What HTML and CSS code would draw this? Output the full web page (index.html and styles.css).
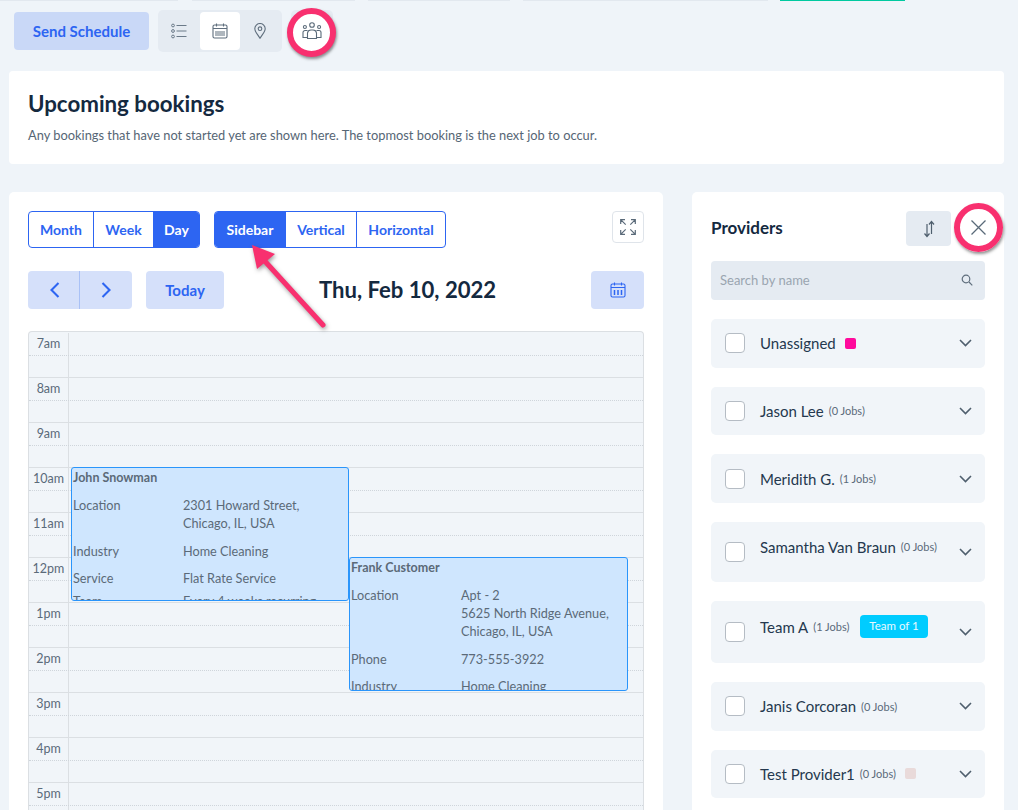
FILE: index.html
```html
<!DOCTYPE html>
<html lang="en">
<head>
<meta charset="utf-8">
<title>Upcoming bookings</title>
<link rel="stylesheet" href="styles.css">
</head>
<body>
<div class="topstrip">
  <span class="ts ts1"></span><span class="ts ts2"></span><span class="ts ts3"></span><span class="ts ts4"></span><span class="ts ts5"></span>
</div>
<div class="toolbar">
  <button class="send">Send Schedule</button>
  <div class="viewtoggle">
    <span class="vt">
      <svg width="16" height="16" viewBox="0 0 16 16" fill="none" stroke="#6b7a89" stroke-width="1"><circle cx="2" cy="2.500" r="1.400"/><circle cx="2" cy="8" r="1.400"/><circle cx="2" cy="13.500" r="1.400"/><path d="M5.500 2.500H15.500M5.500 8H15.500M5.500 13.500H15.500"/></svg>
    </span>
    <span class="vt vt-on">
      <svg width="16" height="16" viewBox="0 0 16 16" fill="none" stroke="#5f6e7d" stroke-width="1.100"><rect x="1" y="2" width="14" height="13" rx="1.500"/><path d="M4.500 .5v3M11.500 .5v3M1 5.500h14"/><path d="M4 8v5M8 8v5M12 8v5M6 8v5M10 8v5" stroke-width="1"/></svg>
    </span>
    <span class="vt vt-pin">
      <svg width="12" height="16" viewBox="0 0 12 16" fill="none" stroke="#5f6e7d" stroke-width="1.100"><path d="M6 15.300C3.800 11.500 .8 8.800 .8 5.700a5.200 5.200 0 0 1 10.400 0c0 3.100-3 5.800-5.200 9.600z"/><circle cx="6" cy="5.700" r="1.800"/></svg>
    </span>
  </div>
  <div class="groupbtn">
    <svg class="groupicon" width="20" height="18" viewBox="0 0 20 18" fill="none" stroke="#5a6a79" stroke-width="1.100"><circle cx="10" cy="3" r="2.300"/><circle cx="2.900" cy="5" r="1.500"/><circle cx="17.100" cy="5" r="1.500"/><path d="M5.500 16.500V11a3.500 3.500 0 0 1 3.500-3h2a3.500 3.500 0 0 1 3.500 3v5.500z"/><path d="M5.500 15.500H1V10.500a2 2 0 0 1 2-2h2.500M14.500 15.500H19V10.500a2 2 0 0 0-2-2h-2.500"/></svg>
    <span class="ring"></span>
  </div>
</div>

<section class="intro">
  <h1>Upcoming bookings</h1>
  <p>Any bookings that have not started yet are shown here. The topmost booking is the next job to occur.</p>
</section>

<main class="columns">
  <section class="calcard">
    <div class="calhead">
      <div class="seg">
        <span class="segitem seg-month">Month</span><span class="segitem seg-week">Week</span><span class="segitem seg-day on">Day</span>
      </div>
      <div class="seg seg-layout">
        <span class="segitem seg-side on">Sidebar</span><span class="segitem seg-vert">Vertical</span><span class="segitem seg-hor">Horizontal</span>
      </div>
      <button class="expand" aria-label="Expand">
        <svg width="16" height="16" viewBox="0 0 16 16" fill="none" stroke="#5a6a79" stroke-width="1.200"><path d="M.7 5V.7H5M.7 .7l5 5M11 .7h4.300V5M15.300 .7l-5 5M.7 11v4.300H5M.7 15.300l5-5M11 15.300h4.300V11M15.300 15.300l-5-5"/></svg>
      </button>
    </div>
    <div class="calnav">
      <div class="pager">
        <span class="pg pg-prev"><svg width="10" height="16" viewBox="0 0 10 16" fill="none" stroke="#2d65f2" stroke-width="2.100"><path d="M8.500 1 1.500 8l7 7"/></svg></span>
        <span class="pg pg-next"><svg width="10" height="16" viewBox="0 0 10 16" fill="none" stroke="#2d65f2" stroke-width="2.100"><path d="m1.500 1 7 7-7 7"/></svg></span>
      </div>
      <button class="today">Today</button>
      <h2 class="date">Thu, Feb 10, 2022</h2>
      <button class="calbtn" aria-label="Pick date">
        <svg width="16" height="16" viewBox="0 0 16 16" fill="none" stroke="#2d65f2" stroke-width="1.100"><rect x="1" y="2" width="14" height="13" rx="1.500"/><path d="M4.500 .5v3M11.500 .5v3M1 5.500h14"/><path d="M4.500 8v5M8 8v5M11.500 8v5" stroke-width="1.500"/></svg>
      </button>
    </div>

    <div class="grid">
      <div class="hour"><span class="hl">7am</span><span class="hb"></span></div>
      <div class="hour"><span class="hl">8am</span><span class="hb"></span></div>
      <div class="hour"><span class="hl">9am</span><span class="hb"></span></div>
      <div class="hour"><span class="hl">10am</span><span class="hb"></span></div>
      <div class="hour"><span class="hl">11am</span><span class="hb"></span></div>
      <div class="hour"><span class="hl">12pm</span><span class="hb"></span></div>
      <div class="hour"><span class="hl">1pm</span><span class="hb"></span></div>
      <div class="hour"><span class="hl">2pm</span><span class="hb"></span></div>
      <div class="hour"><span class="hl">3pm</span><span class="hb"></span></div>
      <div class="hour"><span class="hl">4pm</span><span class="hb"></span></div>
      <div class="hour"><span class="hl">5pm</span><span class="hb"></span></div>

      <article class="event ev-john">
        <div class="evtitle">John Snowman</div>
        <dl>
          <dt>Location</dt><dd>2301 Howard Street,<br>Chicago, IL, USA</dd>
          <dt>Industry</dt><dd>Home Cleaning</dd>
          <dt>Service</dt><dd>Flat Rate Service</dd>
          <dt class="peek">Team</dt><dd class="peek">Every 4 weeks recurring</dd>
        </dl>
      </article>
      <article class="event ev-frank">
        <div class="evtitle">Frank Customer</div>
        <dl>
          <dt>Location</dt><dd>Apt - 2<br>5625 North Ridge Avenue,<br>Chicago, IL, USA</dd>
          <dt>Phone</dt><dd>773-555-3922</dd>
          <dt>Industry</dt><dd>Home Cleaning</dd>
        </dl>
      </article>
    </div>
  </section>

  <aside class="provcard">
    <div class="provhead">
      <h3>Providers</h3>
      <button class="sort" aria-label="Sort">
        <svg width="12" height="18" viewBox="0 0 12 18" fill="none" stroke="#4f5f6e" stroke-width="1.200"><path d="M4 4v12M1.500 13.500 4 16.500l2.500-3M8.500 14V2M6 4.500 8.500 1.500l2.500 3"/></svg>
      </button>
      <button class="close" aria-label="Close">
        <svg width="15" height="15" viewBox="0 0 15 15" fill="none" stroke="#5a6a79" stroke-width="1.300"><path d="m.5 .5 14 14M14.500 .5 .5 14.500"/></svg>
        <span class="ring"></span>
      </button>
    </div>
    <div class="search">
      <span>Search by name</span>
      <svg width="12" height="12" viewBox="0 0 12 12" fill="none" stroke="#5f6e7d" stroke-width="1.200"><circle cx="5" cy="5" r="3.800"/><path d="m8 8 3.300 3.300"/></svg>
    </div>
    <ul class="plist">
      <li class="prow"><span class="cb"></span><span class="pname">Unassigned</span><span class="sw sw-pink"></span><svg class="chev" width="13" height="8" viewBox="0 0 13 8" fill="none" stroke="#4f5f6e" stroke-width="1.600"><path d="m1 1 5.500 5.500L12 1"/></svg></li>
      <li class="prow"><span class="cb"></span><span class="pname">Jason Lee</span><span class="jobs">(0 Jobs)</span><svg class="chev" width="13" height="8" viewBox="0 0 13 8" fill="none" stroke="#4f5f6e" stroke-width="1.600"><path d="m1 1 5.500 5.500L12 1"/></svg></li>
      <li class="prow"><span class="cb"></span><span class="pname">Meridith G.</span><span class="jobs">(1 Jobs)</span><svg class="chev" width="13" height="8" viewBox="0 0 13 8" fill="none" stroke="#4f5f6e" stroke-width="1.600"><path d="m1 1 5.500 5.500L12 1"/></svg></li>
      <li class="prow prow-sam"><span class="cb"></span><span class="pname">Samantha Van Braun</span><span class="jobs">(0 Jobs)</span><svg class="chev" width="13" height="8" viewBox="0 0 13 8" fill="none" stroke="#4f5f6e" stroke-width="1.600"><path d="m1 1 5.500 5.500L12 1"/></svg></li>
      <li class="prow prow-team"><span class="cb"></span><span class="pname">Team A</span><span class="jobs">(1 Jobs)</span><span class="badge">Team of 1</span><svg class="chev" width="13" height="8" viewBox="0 0 13 8" fill="none" stroke="#4f5f6e" stroke-width="1.600"><path d="m1 1 5.500 5.500L12 1"/></svg></li>
      <li class="prow"><span class="cb"></span><span class="pname">Janis Corcoran</span><span class="jobs">(0 Jobs)</span><svg class="chev" width="13" height="8" viewBox="0 0 13 8" fill="none" stroke="#4f5f6e" stroke-width="1.600"><path d="m1 1 5.500 5.500L12 1"/></svg></li>
      <li class="prow"><span class="cb"></span><span class="pname">Test Provider1</span><span class="jobs">(0 Jobs)</span><span class="sw sw-rose"></span><svg class="chev" width="13" height="8" viewBox="0 0 13 8" fill="none" stroke="#4f5f6e" stroke-width="1.600"><path d="m1 1 5.500 5.500L12 1"/></svg></li>
    </ul>
  </aside>
</main>

<svg class="arrow" width="90" height="95" viewBox="0 0 90 95" fill="none">
  <path d="M77 85 16 18" stroke="#f8306f" stroke-width="5" stroke-linecap="round"/>
  <path d="M6 5 29 14 11 29z" fill="#f8306f"/>
</svg>
</body>
</html>
```
FILE: styles.css
```css
* { box-sizing: border-box; }
html, body { margin: 0; padding: 0; height: 810px; overflow: hidden; }
body { background: #eff4f9; font-family: "Lato", "Liberation Sans", sans-serif; color: #14293f; position: relative; }
button { font-family: inherit; border: 0; padding: 0; }

.topstrip { display: flex; height: 1px; }
.ts { display: block; height: 1px; background: #e2e8ef; }
.ts1 { width: 178px; }
.ts2 { width: 163px; margin-left: 14px; }
.ts3 { width: 142px; margin-left: 13px; }
.ts4 { width: 245px; margin-left: 13px; }
.ts5 { width: 125px; margin-left: 12px; background: #00c9a0; }

.toolbar { display: flex; align-items: center; height: 42px; margin: 9px 0 0 14px; }
.send { width: 135px; height: 38px; border-radius: 4px; background: #c9d8f7; color: #2d65f2; font-size: 15px; font-weight: 700; }
.viewtoggle { display: flex; width: 124px; height: 42px; margin-left: 9px; background: #e5ebf2; border-radius: 5px; padding: 2px 0 2px 1px; }
.vt { width: 40px; height: 38px; display: flex; align-items: center; justify-content: center; }
.vt-on { background: #fff; border-radius: 4px; margin-left: 1px; }
.vt-pin { width: 39px; }
.groupbtn { position: relative; width: 42px; height: 42px; margin-left: 9px; background: #e5ebf2; border-radius: 5px; display: flex; align-items: center; justify-content: center; }
.groupicon { position: relative; z-index: 2; }
.ring { position: absolute; left: 50%; top: 50%; width: 49px; height: 49px; margin: -24.500px 0 0 -24.500px; border: 6.500px solid #f8306f; border-radius: 50%; box-shadow: 1px 2px 3px rgba(60, 60, 60, .55); pointer-events: none; z-index: 1; }
.groupbtn .ring { background: #fff; margin: -23px 0 0 -25px; }

.intro { margin: 19px 14px 0 9px; height: 93px; background: #fff; border-radius: 4px; padding: 19px; }
.intro h1 { margin: 0; font-size: 22.300px; line-height: 27px; font-weight: 700; color: #14293f; }
.intro p { margin: 10px 0 0; font-size: 12.850px; line-height: 16px; color: #566675; }

.columns { display: flex; align-items: flex-start; margin: 28px 14px 0 9px; }
.calcard { position: relative; width: 654px; height: 700px; background: #fff; border-radius: 5px 5px 0 0; padding: 19px; }
.calhead { display: flex; align-items: flex-start; height: 37px; }
.seg { display: flex; height: 37px; border: 1px solid #2d65f2; border-radius: 4px; overflow: hidden; }
.seg-layout { margin-left: 14px; }
.segitem { display: flex; align-items: center; justify-content: center; font-size: 14px; font-weight: 700; color: #2d65f2; border-left: 1px solid #2d65f2; }
.segitem:first-child { border-left: 0; }
.segitem.on { background: #2d65f2; color: #fff; }
.seg-month { width: 64px; } .seg-week { width: 60px; } .seg-day { width: 46px; }
.seg-side { width: 70px; } .seg-vert { width: 71px; } .seg-hor { width: 89px; }
.expand { margin-left: auto; width: 32px; height: 32px; background: #fff; border: 1px solid #dfe4ea; border-radius: 4px; display: flex; align-items: center; justify-content: center; }

.calnav { display: flex; align-items: center; height: 38px; margin-top: 23px; }
.pager { display: flex; width: 104px; height: 38px; background: #d5e0fa; border-radius: 4px; }
.pg { width: 52px; flex: none; display: flex; align-items: center; justify-content: center; }
.pg-prev { border-right: 1px solid #a9c1f6; padding-left: 2px; }
.today { width: 78px; height: 38px; margin-left: 14px; background: #d5e0fa; color: #2d65f2; border-radius: 4px; font-size: 15px; font-weight: 700; }
.date { margin: 0 0 0 95px; font-size: 22.100px; line-height: 38px; font-weight: 700; color: #14293f; white-space: nowrap; }
.calbtn { margin-left: auto; width: 53px; height: 38px; background: #d5e0fa; border-radius: 4px; display: flex; align-items: center; justify-content: center; }

.grid { position: relative; width: 616px; margin-top: 22px; padding-top: 1px; background: #f1f5f9; border: 1px solid #dbdfe3; border-bottom: 0; border-radius: 4px 4px 0 0; }
.hour { position: relative; display: flex; height: 45px; border-bottom: 1px solid #dbdfe3; }
.hl { width: 40px; flex: none; border-right: 1px solid #dbdfe3; font-size: 12.500px; line-height: 22px; text-align: center; color: #5a6a79; height: 44px; }
.hb { flex: 1; }
.hour::after { content: ""; position: absolute; left: 0; right: 0; top: 22px; border-top: 1px dotted #cfd5db; }

.event { position: absolute; width: 279px; height: 134px; background: #cfe6fe; border: 1px solid #2a95fb; border-radius: 3px; overflow: hidden; padding: 1px; color: #5b6a78; font-size: 12.700px; line-height: 18px; z-index: 2; }
.ev-john { left: 42px; top: 135px; width: 278px; }
.ev-frank { left: 320px; top: 225px; }
.evtitle { font-size: 12.500px; font-weight: 700; line-height: 18px; }
.event dl { display: grid; grid-template-columns: 110px 1fr; row-gap: 9.500px; margin: 9px 0 0; }
.event dt, .event dd { margin: 0; }
.event .peek { margin-top: -5px; }

.provcard { width: 312px; height: 700px; margin-left: 29px; background: #fff; border-radius: 5px 5px 0 0; padding: 19px; }
.provhead { display: flex; align-items: flex-start; height: 35px; }
.provhead h3 { margin: 0; font-size: 17px; line-height: 33px; font-weight: 700; color: #14293f; }
.sort { margin-left: auto; margin-right: 10px; width: 45px; height: 35px; background: #e5ebf2; border-radius: 4px; display: flex; align-items: center; justify-content: center; }
.close { position: relative; width: 34px; height: 32px; background: transparent; display: flex; align-items: center; justify-content: center; margin-right: -10px; }
.close svg { position: relative; z-index: 2; margin-top: 1px; }
.search { display: flex; align-items: center; justify-content: space-between; height: 39px; margin-top: 15px; padding: 0 12px 2px 9px; background: #e5ebf2; border-radius: 4px; font-size: 13px; color: #9aa5b0; }

.plist { list-style: none; margin: 19px 0 0; padding: 0; display: flex; flex-direction: column; gap: 19px; }
.prow { position: relative; display: flex; align-items: center; height: 48.670px; padding: 0 14px; background: #f1f5f9; border-radius: 5px; }
.prow-sam { height: 60px; }
.prow-team { height: 62px; }
.prow-sam .pname, .prow-sam .jobs, .prow-team .pname, .prow-team .jobs, .prow-team .badge { position: relative; top: -5px; }
.cb { width: 20px; height: 20px; flex: none; background: #fff; border: 1px solid #b5bcc4; border-radius: 4px; margin-right: 15px; }
.pname { font-size: 15px; color: #24384e; white-space: nowrap; }
.jobs { font-size: 11px; color: #5a6a79; margin-left: 5px; white-space: nowrap; }
.sw { width: 11px; height: 11px; border-radius: 2px; margin-left: 9px; }
.sw-pink { background: #ff0a9c; }
.sw-rose { background: #e9dada; }
.badge { height: 23px; line-height: 22px; padding: 0 9px; margin-left: 11px; background: #00ccff; color: #e9f9ff; font-size: 11.500px; border-radius: 4px; white-space: nowrap; }
.chev { margin-left: auto; margin-right: -1px; }

.arrow { position: absolute; left: 246px; top: 240px; z-index: 5; overflow: visible; filter: drop-shadow(1px 2px 2px rgba(60, 60, 60, .5)); }
```
